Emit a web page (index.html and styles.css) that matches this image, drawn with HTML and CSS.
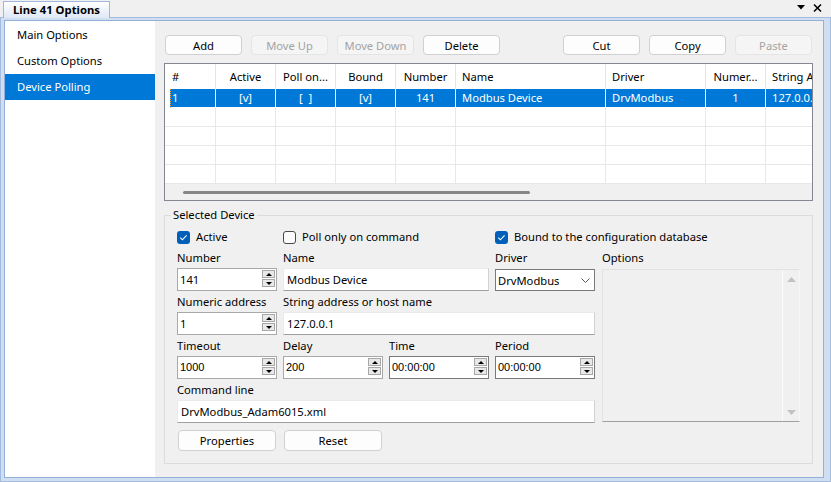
FILE: index.html
```html
<!DOCTYPE html>
<html>
<head>
<meta charset="utf-8">
<title>Line 41 Options</title>
<link rel="stylesheet" href="styles.css">
</head>
<body>
<div class="window">
  <div class="titlebar">
    <div class="tab">Line 41 Options</div>
    <div class="title-icons">
      <svg width="8" height="5" viewBox="0 0 8 5"><path d="M0 0H8L4 4.5Z" fill="#000"/></svg>
      <svg width="9" height="8" viewBox="0 0 9 8"><path d="M1 0.5L8 7.5M8 0.5L1 7.5" stroke="#000" stroke-width="1.5"/></svg>
    </div>
  </div>
  <div class="frame">
    <div class="inner">
      <nav class="nav">
        <div class="nav-item">Main Options</div>
        <div class="nav-item">Custom Options</div>
        <div class="nav-item selected">Device Polling</div>
      </nav>
      <main class="pane">
        <div class="toolbar">
          <div class="btn-group">
            <button class="btn">Add</button>
            <button class="btn disabled">Move Up</button>
            <button class="btn disabled">Move Down</button>
            <button class="btn">Delete</button>
          </div>
          <div class="btn-group">
            <button class="btn">Cut</button>
            <button class="btn">Copy</button>
            <button class="btn disabled">Paste</button>
          </div>
        </div>

        <div class="grid">
          <div class="row head">
            <span class="hash">#</span>
            <span class="c">Active</span>
            <span class="c">Poll on...</span>
            <span class="c">Bound</span>
            <span class="c">Number</span>
            <span class="l">Name</span>
            <span class="l">Driver</span>
            <span class="c">Numer...</span>
            <span class="l">String Address</span>
          </div>
          <div class="row sel">
            <span class="first"></span>
            <span class="focus">1</span>
            <span class="c">[v]</span>
            <span class="c">[&nbsp;&nbsp;]</span>
            <span class="c">[v]</span>
            <span class="c">141</span>
            <span class="l">Modbus Device</span>
            <span class="l">DrvModbus</span>
            <span class="c">1</span>
            <span class="l">127.0.0.1</span>
          </div>
          <div class="row"><span class="first"></span><span></span><span></span><span></span><span></span><span></span><span></span><span></span><span></span><span></span></div>
          <div class="row"><span class="first"></span><span></span><span></span><span></span><span></span><span></span><span></span><span></span><span></span><span></span></div>
          <div class="row"><span class="first"></span><span></span><span></span><span></span><span></span><span></span><span></span><span></span><span></span><span></span></div>
          <div class="row"><span class="first"></span><span></span><span></span><span></span><span></span><span></span><span></span><span></span><span></span><span></span></div>
          <div class="hscroll"><div class="thumb"></div></div>
        </div>

        <fieldset class="group">
          <legend>Selected Device</legend>
          <div class="group-body">
            <div class="checks">
              <label class="check"><span class="box on"><svg width="13" height="13" viewBox="0 0 13 13"><path d="M3.3 6.7L5.4 8.8L9.6 4.4" fill="none" stroke="#fff" stroke-width="1.1"/></svg></span>Active</label>
              <label class="check poll"><span class="box off"></span>Poll only on command</label>
              <label class="check bound"><span class="box on"><svg width="13" height="13" viewBox="0 0 13 13"><path d="M3.3 6.7L5.4 8.8L9.6 4.4" fill="none" stroke="#fff" stroke-width="1.1"/></svg></span>Bound to the configuration database</label>
            </div>

            <div class="form">
              <div class="lbl c1 r1">Number</div>
              <div class="lbl c2w r1">Name</div>
              <div class="lbl c4 r1">Driver</div>
              <div class="lbl c5 r1">Options</div>

              <div class="spin c1 r2"><span class="val">141</span><span class="spin-btns"><span class="sb up"></span><span class="sb dn"></span></span></div>
              <div class="field c2w r2">Modbus Device</div>
              <div class="combo c4 r2"><span>DrvModbus</span><svg width="9" height="5" viewBox="0 0 9 5"><path d="M0.5 0.5L4.5 4.5L8.5 0.5" fill="none" stroke="#555" stroke-width="1"/></svg></div>
              <div class="options">
                <div class="vscroll">
                  <svg width="9" height="5" viewBox="0 0 9 5"><path d="M0 5H9L4.5 0Z" fill="#c2c2c2"/></svg>
                  <svg width="9" height="5" viewBox="0 0 9 5"><path d="M0 0H9L4.5 5Z" fill="#c2c2c2"/></svg>
                </div>
              </div>

              <div class="lbl c1 r3">Numeric address</div>
              <div class="lbl c2x r3">String address or host name</div>
              <div class="spin c1 r4"><span class="val">1</span><span class="spin-btns"><span class="sb up"></span><span class="sb dn"></span></span></div>
              <div class="field c2x r4">127.0.0.1</div>

              <div class="lbl c1 r5">Timeout</div>
              <div class="lbl c2 r5">Delay</div>
              <div class="lbl c3 r5">Time</div>
              <div class="lbl c4 r5">Period</div>
              <div class="spin c1 r6"><span class="val mono">1000</span><span class="spin-btns"><span class="sb up"></span><span class="sb dn"></span></span></div>
              <div class="spin c2 r6"><span class="val mono">200</span><span class="spin-btns"><span class="sb up"></span><span class="sb dn"></span></span></div>
              <div class="spin dark c3 r6"><span class="val mono">00:00:00</span><span class="spin-btns"><span class="sb up"></span><span class="sb dn"></span></span></div>
              <div class="spin dark c4 r6"><span class="val mono">00:00:00</span><span class="spin-btns"><span class="sb up"></span><span class="sb dn"></span></span></div>

              <div class="lbl cAll r7">Command line</div>
              <div class="field cAll r8">DrvModbus_Adam6015.xml</div>
            </div>

            <div class="actions">
              <button class="btn wide">Properties</button>
              <button class="btn wide">Reset</button>
            </div>
          </div>
        </fieldset>
      </main>
    </div>
  </div>
</div>
</body>
</html>
```
FILE: styles.css
```css
* { box-sizing: border-box; }
html, body { margin: 0; padding: 0; }
body {
  width: 831px;
  height: 482px;
  overflow: hidden;
  background: #f0f0f0;
  font-family: "Noto Sans", "Liberation Sans", sans-serif;
  font-size: 11.2px;
  color: #000;
}
.window { display: flex; flex-direction: column; height: 482px; }

/* title strip */
.titlebar {
  height: 17px;
  display: flex;
  justify-content: space-between;
  align-items: flex-start;
  position: relative;
  z-index: 1;
}
.tab {
  margin: 1px 0 0 3px;
  width: 107px;
  height: 17px;
  padding-left: 9px;
  border: 1px solid #9fb7dc;
  border-bottom: none;
  background: linear-gradient(#ffffff, #dfe8f6);
  font-weight: bold;
  font-size: 11.3px;
  line-height: 15px;
  white-space: nowrap;
}
.title-icons {
  display: flex;
  align-items: flex-start;
  gap: 8px;
  margin: 4px 9px 0 0;
}
.title-icons svg:first-child { margin-top: 1px; }

/* frame */
.frame {
  flex: 1;
  display: flex;
  border: 1px solid #a3bbdf;
  background: #d0def2;
  padding: 2px 6px 3px 3px;
}
.inner {
  flex: 1;
  display: flex;
  border: 1px solid #93b0da;
  min-height: 0;
}
.nav { width: 150px; flex: none; background: #fff; padding-top: 1px; }
.nav-item { height: 26px; line-height: 26px; padding-left: 12px; white-space: nowrap; }
.nav-item.selected { background: #0078d7; color: #fff; }

.pane {
  flex: 1;
  background: #f0f0f0;
  padding: 14px 10px 0 9px;
  display: flex;
  flex-direction: column;
}

/* buttons */
.toolbar { display: flex; justify-content: space-between; padding: 0 1px; height: 20px; }
.btn-group { display: flex; gap: 9px; }
.btn {
  width: 77px;
  height: 20px;
  padding: 0;
  border: 1px solid #d0d0d0;
  border-radius: 4px;
  background: #fdfdfd;
  font: inherit;
  color: #000;
  line-height: 17px;
  text-align: center;
}
.btn.disabled { background: #f5f5f5; border-color: #e5e5e5; color: #a3a3a3; }
.btn.wide { width: 98px; height: 21px; line-height: 18px; }

/* data grid */
.grid {
  margin-top: 8px;
  height: 138px;
  border: 1px solid #828790;
  background: #fff;
}
.row {
  display: grid;
  grid-template-columns: 5px 46px 60px 60px 60px 60px 150px 100px 60px 1fr;
  height: 19px;
}
.row > span {
  border-right: 1px solid #e8e8e8;
  border-bottom: 1px solid #e8e8e8;
  white-space: nowrap;
  overflow: hidden;
  line-height: 18px;
}
.row > span:last-child { border-right: none; }
.row > span.first { border-right: none; }
.row.head { height: 25px; }
.row.head > span { border-bottom: none; line-height: 25px; border-right-color: #e5e5e5; }
.row.head .hash { grid-column: 1 / 3; padding-left: 7px; }
.c { text-align: center; }
.l { padding-left: 6px; }
.row.sel > span { background: #0078d7; color: #fff; border-color: #fff; }
.row.sel > span.first { background: #fff; }
.row.sel > span.focus { border-left: 1px dotted #f0a040; padding-left: 1px; }
.hscroll {
  height: 16px;
  background: #f0f0f0;
  display: flex;
  align-items: center;
  padding-left: 18px;
}
.thumb { width: 347px; height: 3px; border-radius: 2px; background: #868686; }

/* group box */
.group {
  margin: 6px 0 0;
  padding: 6px 0 12px;
  border: 1px solid #dcdcdc;
  min-width: 0;
}
.group legend {
  margin-left: 6px;
  padding: 0 2px;
  height: 16px;
  line-height: 16px;
}
.group-body { padding: 0 12px; }

.checks, .form {
  display: grid;
  grid-template-columns: 100px 100px 100px 100px 199px;
  column-gap: 6px;
}
.checks { height: 16px; }
.check { display: flex; align-items: center; gap: 6px; line-height: 16px; white-space: nowrap; }
.check.poll { grid-column: 2 / 4; }
.check.bound { grid-column: 4 / 6; }
.box { width: 13px; height: 13px; border-radius: 3px; flex: none; display: block; }
.box svg { display: block; }
.box.on { background: #005fb8; }
.box.off { border: 1px solid #4a4a4a; background: #fbfbfb; }

.form {
  margin-top: 4px;
  grid-template-rows: 17px 23px 17px 23px 17px 23px 17px 23px;
  row-gap: 2px;
}
.c1 { grid-column: 1; }
.c2 { grid-column: 2; }
.c3 { grid-column: 3; }
.c4 { grid-column: 4; }
.c5 { grid-column: 5; margin-left: 1px; }
.c2w { grid-column: 2 / 4; }
.c2x { grid-column: 2 / 5; }
.cAll { grid-column: 1 / 5; }
.r1 { grid-row: 1; } .r2 { grid-row: 2; } .r3 { grid-row: 3; } .r4 { grid-row: 4; }
.r5 { grid-row: 5; } .r6 { grid-row: 6; } .r7 { grid-row: 7; } .r8 { grid-row: 8; }

.lbl { line-height: 17px; white-space: nowrap; }

.spin {
  display: flex;
  align-items: center;
  background: #fff;
  border: 1px solid #a9a9a9;
  padding-left: 2px;
}
.spin.dark { border-color: #7a7a7a; }
.spin .val { flex: 1; line-height: 21px; white-space: nowrap; }
.spin .val.mono { font-family: "Liberation Sans", Arial, sans-serif; font-size: 11px; }
.spin-btns {
  align-self: flex-start;
  margin: 1px 1px 0 0;
  width: 13px;
  display: flex;
  flex-direction: column;
  gap: 1px;
}
.sb {
  height: 8px;
  background: #e8e8e8;
  border: 1px solid #a8a8a8;
  display: flex;
  align-items: center;
  justify-content: center;
}
.sb::before {
  content: "";
  border-left: 3px solid transparent;
  border-right: 3px solid transparent;
}
.sb.up::before { border-bottom: 3px solid #000; }
.sb.dn::before { border-top: 3px solid #000; }

.field {
  background: #fff;
  border: 1px solid;
  border-color: #ebebeb #d2d2d2 #a0a0a0 #ebebeb;
  padding-left: 3px;
  line-height: 21px;
  white-space: nowrap;
}
.combo {
  margin-top: 1px;
  height: 22px;
  display: flex;
  align-items: center;
  justify-content: space-between;
  background: #fff;
  border: 1px solid #7a7a7a;
  padding: 0 4px 0 2px;
}
.options {
  grid-column: 5;
  grid-row: 2 / 9;
  margin: 1px 0 1px 1px;
  border: 1px solid;
  border-color: #e2e2e2 #f6f6f6 #a0a0a0 #e2e2e2;
  display: flex;
  justify-content: flex-end;
}
.vscroll {
  width: 17px;
  border-left: 1px solid #fbfbfb;
  display: flex;
  flex-direction: column;
  justify-content: space-between;
  align-items: center;
  padding: 7px 0 6px;
}
.vscroll svg { display: block; }

.actions { display: flex; gap: 8px; margin-top: 7px; padding-left: 1px; }
```
